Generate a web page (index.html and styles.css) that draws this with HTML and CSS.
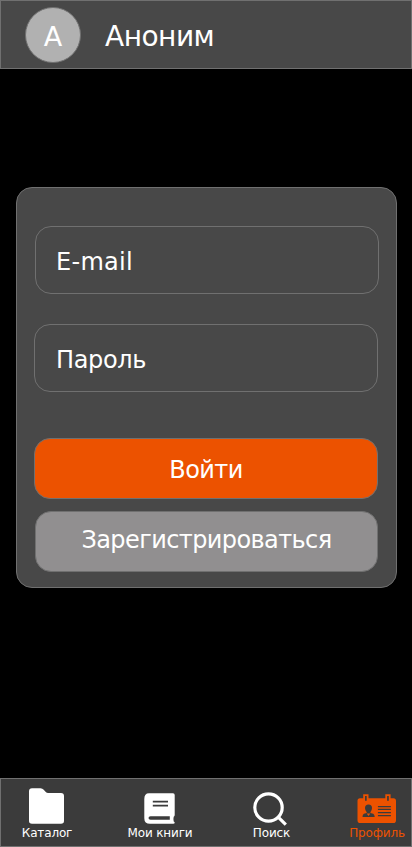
FILE: index.html
```html
<!DOCTYPE html>
<html lang="ru">
<head>
<meta charset="utf-8">
<title>Профиль</title>
<link rel="stylesheet" href="styles.css">
</head>
<body>
<div class="app">
  <header class="header">
    <div class="avatar"><span>А</span></div>
    <div class="username">Аноним</div>
  </header>
  <main class="main">
    <form class="card">
      <div class="field email">E-mail</div>
      <div class="field password">Пароль</div>
      <div class="button login">Войти</div>
      <div class="button register">Зарегистрироваться</div>
    </form>
  </main>
  <nav class="nav">
    <a class="item catalog">
      <svg width="50" height="40" viewBox="22 786 50 40"><path fill="#fff" d="M32 788.300h8.500q2 0 3.200 1.500l2.300 2.400q.8.800 2 .8h13q3 0 3 3v25q0 2.800-3 2.800H32q-3 0-3-2.800v-29.700q0-3 3-3z"/></svg>
      <span>Каталог</span>
    </a>
    <a class="item books">
      <svg width="66" height="40" viewBox="127 786 66 40"><path fill="#fff" d="M149 793.300h24q1.700 0 1.700 1.700v20q0 1-1 1.700-.6 2.500 0 4.800 1 .5 1 1.200 0 1-1.500 1H150q-5.700 0-5.700-5.500V799q0-5.700 4.700-5.700z"/><path fill="#3b3b3b" d="M152.800 800.800h15.200v1.800h-15.200zM152.800 804.700h15.200v1.800h-15.200zM150.500 816.200h19.300v3.500h-19.300q-2 0-2-1.700t2-1.800z"/></svg>
      <span>Мои книги</span>
    </a>
    <a class="item search">
      <svg width="39" height="40" viewBox="252 786 39 40"><g fill="none" stroke="#fff" stroke-width="3.200"><circle cx="268.500" cy="807.500" r="13.700"/><path d="M278.200 817.200l7.600 7.400"/></g></svg>
      <span>Поиск</span>
    </a>
    <a class="item profile">
      <svg width="56" height="40" viewBox="349 786 56 40"><path fill="#ec5200" d="M360 798.300h33.500q2.500 0 2.500 2.500v19.500q0 2.800-2.500 2.800H360q-2.500 0-2.500-2.800v-19.500q0-2.500 2.500-2.500zM363.200 794.200h5.300v6.500h-5.300zM385.300 794.200h5.300v6.500h-5.300z"/><g fill="#3b3b3b"><path d="M365 796h1.700v4.800H365zM387.100 796h1.700v4.800h-1.700zM368.500 804.500q3.500 0 3.500 3.500 0 2.400-1.600 4.200v.8l2.800.8q1.400.6 1.500 3.300h-12.200q0-2.700 1.400-3.300l2.800-.8v-.8q-1.700-1.800-1.700-4.200 0-3.500 3.500-3.500z"/><path d="M377.900 805.900h13v1.300h-13zM377.900 808.800h13v1.300h-13zM377.900 811.900h13v1.300h-13zM377.900 815h13v1.300h-13z"/></g><path fill="#ec5200" d="M366.700 813.500h3.600l-1.800 2.400z"/></svg>
      <span>Профиль</span>
    </a>
  </nav>
</div>
</body>
</html>
```
FILE: styles.css
```css
* { box-sizing: border-box; }
body {
  margin: 0;
  background: #000;
  color: #fff;
  font-family: Verdana, "DejaVu Sans", sans-serif;
}
.app {
  height: 847px;
  width: 412px;
  display: flex;
  flex-direction: column;
  overflow: hidden;
}
.header {
  height: 69px;
  flex: none;
  display: flex;
  align-items: flex-start;
  padding: 6px 0 0 24px;
  background: #484848;
  border: 1px solid #707070;
}
.avatar {
  width: 56px;
  height: 56px;
  border-radius: 50%;
  background: #b1b1b1;
  border: 1px solid #707070;
  text-align: center;
  font-size: 27px;
  line-height: 57px;
}
.username {
  margin-left: 24px;
  font-size: 28px;
  line-height: 60px;
  letter-spacing: -0.5px;
  white-space: nowrap;
}
.main {
  flex: 1;
  padding: 118px 15px 0 16px;
}
.card {
  height: 401px;
  padding: 38px 17px 0;
  background: #484848;
  border: 1px solid #707070;
  border-radius: 16px;
  font-size: 24px;
  white-space: nowrap;
}
.field, .button {
  width: 344px;
  border: 1px solid #707070;
  border-radius: 16px;
}
.field {
  height: 68px;
  line-height: 70px;
  padding-left: 21px;
}
.email { margin-left: 1px; padding-left: 20px; letter-spacing: 0.3px; }
.password { margin-top: 30px; letter-spacing: -0.35px; }
.button {
  height: 61px;
  line-height: 62px;
  text-align: center;
  letter-spacing: -0.6px;
}
.login { margin-top: 46px; background: #ec5200; }
.register {
  width: 343px;
  margin: 12px 0 0 1px;
  line-height: 56px;
  background: #918f90;
}
.nav {
  height: 69px;
  flex: none;
  display: flex;
  padding: 7px 0 0 21px;
  background: #3b3b3b;
  border: 1px solid #707070;
}
.item {
  display: flex;
  flex: none;
  flex-direction: column;
  align-items: center;
  font-size: 12px;
  line-height: 14px;
  letter-spacing: -0.15px;
  white-space: nowrap;
}
.item svg { display: block; flex: none; }
.catalog { width: 50px; }
.books { width: 66px; margin-left: 55px; }
.search { width: 39px; margin-left: 59px; }
.profile { width: 56px; margin-left: 58px; color: #ec5200; }
```
